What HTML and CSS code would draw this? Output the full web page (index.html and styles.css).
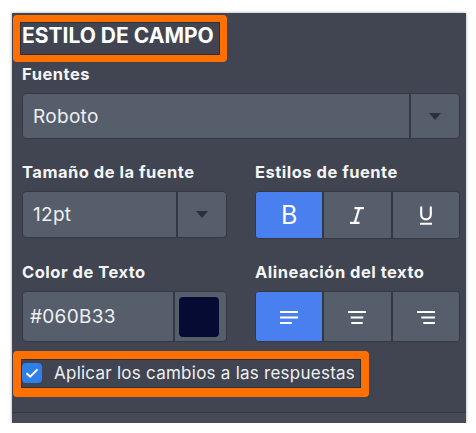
FILE: index.html
```html
<!DOCTYPE html>
<html lang="es">
<head>
<meta charset="utf-8">
<title>Estilo de campo</title>
<link rel="stylesheet" href="styles.css">
</head>
<body>
<div class="panel">
  <div class="panel-body">
    <h2 class="title">ESTILO DE CAMPO</h2>

    <div class="label">Fuentes</div>
    <div class="select select-wide">
      <span class="select-value">Roboto</span>
      <span class="select-arrow"><span class="tri"></span></span>
    </div>

    <div class="grid">
      <div class="field">
        <div class="label">Tamaño de la fuente</div>
        <div class="select select-small">
          <span class="select-value">12pt</span>
          <span class="select-arrow"><span class="tri"></span></span>
        </div>
      </div>
      <div class="field">
        <div class="label">Estilos de fuente</div>
        <div class="btn-group btn-group-style">
          <button class="btn active"><span class="glyph-b">B</span></button>
          <button class="btn">
            <svg width="16" height="17" viewBox="0 0 16 17"><path d="M5.5 1.2H15M1 15.8H10.5M10.2 1.2L5.8 15.8" stroke="#fff" stroke-width="2.2" fill="none"/></svg>
          </button>
          <button class="btn">
            <svg width="14" height="19" viewBox="0 0 14 19"><path d="M2.2 0.5V8.6a4.8 4.8 0 0 0 9.6 0V0.5" stroke="#fff" stroke-width="2.1" fill="none"/><path d="M1 17.8H13" stroke="#fff" stroke-width="2" fill="none"/></svg>
          </button>
        </div>
      </div>

      <div class="field">
        <div class="label">Color de Texto</div>
        <div class="color-input">
          <span class="color-value">#060B33</span>
          <span class="color-swatch-wrap"><span class="color-swatch"></span></span>
        </div>
      </div>
      <div class="field">
        <div class="label">Alineación del texto</div>
        <div class="btn-group btn-group-align">
          <button class="btn active">
            <svg width="18" height="14" viewBox="0 0 18 14"><rect x="0" y="1" width="18" height="2" fill="#fff"/><rect x="0" y="6.5" width="18" height="2" fill="#fff"/><rect x="0" y="12" width="12" height="2" fill="#fff"/></svg>
          </button>
          <button class="btn">
            <svg width="18" height="14" viewBox="0 0 18 14"><rect x="0" y="1" width="18" height="2" fill="#fff"/><rect x="2.7" y="6.5" width="12.6" height="2" fill="#fff"/><rect x="3.3" y="12" width="11.4" height="2" fill="#fff"/></svg>
          </button>
          <button class="btn">
            <svg width="18" height="14" viewBox="0 0 18 14"><rect x="0" y="1" width="18" height="2" fill="#fff"/><rect x="4.3" y="6.5" width="13.7" height="2" fill="#fff"/><rect x="6.3" y="12" width="11.7" height="2" fill="#fff"/></svg>
          </button>
        </div>
      </div>
    </div>

    <label class="check-row">
      <span class="checkbox">
        <svg width="14" height="12" viewBox="0 0 14 12"><path d="M1.5 6.2L5.2 9.6L12.5 2.4" stroke="#fff" stroke-width="2" fill="none"/></svg>
      </span>
      <span class="check-text">Aplicar los cambios a las respuestas</span>
    </label>
  </div>
  <div class="panel-footer"></div>

  <div class="highlight highlight-title"></div>
  <div class="highlight highlight-check"></div>
</div>
</body>
</html>
```

FILE: styles.css
```css
* { box-sizing: border-box; }

html, body {
  margin: 0;
  padding: 0;
  background: #ffffff;
}

body {
  font-family: "Inter", "Liberation Sans", sans-serif;
  color: #f4f5f7;
  padding: 13px 0 0 12px;
}

.panel {
  position: relative;
  width: 454px;
  background: #404551;
  box-shadow: 0 0 3px rgba(0, 0, 0, 0.35);
}

.panel-body {
  padding: 10px 6px 0 10px;
}

.title {
  margin: 0 0 15px;
  font-size: 21px;
  line-height: 26px;
  height: 26px;
  font-weight: 700;
  color: #ffffff;
  letter-spacing: 0;
}

.label {
  font-size: 16.5px;
  line-height: 20px;
  font-weight: 700;
  letter-spacing: 0.5px;
  color: #f4f5f7;
  margin-bottom: 9px;
}

.select {
  display: flex;
  background: #565e6c;
  border: 1px solid #343842;
  border-radius: 4px;
  overflow: hidden;
}

.select-wide { height: 46px; }
.select-small { height: 47px; }

.select-value {
  flex: 1;
  display: flex;
  align-items: center;
  padding-left: 10px;
  font-size: 19px;
  letter-spacing: 0.3px;
  color: #eef0f3;
}

.select-arrow {
  width: 50px;
  display: flex;
  align-items: center;
  justify-content: center;
  border-left: 2px solid #343842;
}

.tri {
  width: 0;
  height: 0;
  border-left: 6px solid transparent;
  border-right: 6px solid transparent;
  border-top: 7px solid #2c3038;
}

.grid {
  display: grid;
  grid-template-columns: 205px 205px;
  column-gap: 28px;
  row-gap: 23px;
  margin-top: 23px;
}

.btn-group {
  display: flex;
  border: 1px solid #343842;
  border-radius: 4px;
  overflow: hidden;
  background: #565e6c;
}

.btn-group-style { height: 48px; }
.btn-group-align { height: 51px; }

.btn {
  flex: 1;
  display: flex;
  align-items: center;
  justify-content: center;
  border: none;
  margin: 0;
  padding: 0;
  background: #565e6c;
  color: #ffffff;
  border-left: 2px solid #343842;
}

.btn:first-child { border-left: none; }

.btn.active { background: #4a7ff0; }

.glyph-b {
  font-family: "Inter", "Liberation Sans", sans-serif;
  font-size: 25px;
  font-weight: 400;
  line-height: 1;
  color: #ffffff;
}

.color-input {
  display: flex;
  height: 51px;
  background: #565e6c;
  border: 1px solid #343842;
  border-radius: 4px;
  overflow: hidden;
}

.color-value {
  flex: 1;
  display: flex;
  align-items: center;
  padding-left: 7px;
  font-size: 19px;
  letter-spacing: 0.3px;
  color: #eef0f3;
}

.color-swatch-wrap {
  display: flex;
  align-items: center;
  padding: 0 7px 0 4px;
  border-left: 2px solid #343842;
}

.color-swatch {
  width: 40px;
  height: 40px;
  border-radius: 4px;
  background: #060b33;
}

.check-row {
  display: flex;
  align-items: center;
  gap: 12px;
  height: 40px;
  margin-top: 11px;
}

.checkbox {
  width: 20px;
  height: 20px;
  border-radius: 4px;
  background: #2f7fe8;
  display: flex;
  align-items: center;
  justify-content: center;
}

.check-text {
  font-size: 17px;
  letter-spacing: 0.25px;
  color: #eef0f3;
}

.panel-footer {
  margin-top: 19px;
  height: 11px;
  border-top: 1px solid #343842;
  background: #454a56;
}

.highlight {
  position: absolute;
  border: 7px solid #ff7000;
  border-radius: 4px;
  box-shadow: inset 0 0 0 1px #2b2f37;
}

.highlight-title {
  left: 1px;
  top: 2px;
  width: 214px;
  height: 47px;
}

.highlight-check {
  left: 1px;
  top: 338px;
  width: 356px;
  height: 46px;
  border-width: 8px 8px 9px 8px;
}
```
